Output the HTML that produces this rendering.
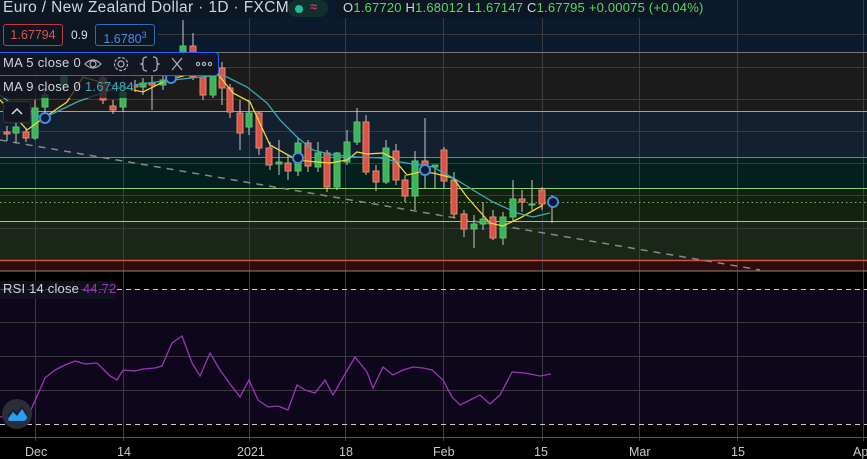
<!DOCTYPE html>
<html><head><meta charset="utf-8"><style>
body{margin:0;width:867px;height:459px;overflow:hidden;background:#000;font-family:"Liberation Sans",sans-serif}
.t{position:absolute;white-space:nowrap}
</style></head><body>
<svg width="867" height="459" style="position:absolute;left:0;top:0" xmlns="http://www.w3.org/2000/svg">
<rect x="0" y="0" width="867" height="52" fill="#0b1a2d"/>
<rect x="0" y="52" width="867" height="59" fill="#1b1b1c"/>
<rect x="0" y="111" width="867" height="46" fill="#122030"/>
<rect x="0" y="157" width="867" height="31" fill="#03201d"/>
<rect x="0" y="188" width="867" height="34" fill="#12220f"/>
<rect x="0" y="222" width="867" height="38" fill="#1a2617"/>
<rect x="0" y="260" width="867" height="11" fill="#2c0c0c"/>
<rect x="0" y="289" width="867" height="135" fill="#0e061a"/>
<g stroke="#3a3a3e" stroke-width="1">
<line x1="0" y1="34.5" x2="867" y2="34.5"/><line x1="0" y1="67.5" x2="867" y2="67.5"/><line x1="0" y1="99.5" x2="867" y2="99.5"/>
<line x1="0" y1="131.5" x2="867" y2="131.5"/><line x1="0" y1="163.5" x2="867" y2="163.5"/><line x1="0" y1="195.5" x2="867" y2="195.5"/><line x1="0" y1="228.5" x2="867" y2="228.5"/>
<line x1="0" y1="322.5" x2="867" y2="322.5"/><line x1="0" y1="356.5" x2="867" y2="356.5"/><line x1="0" y1="390.5" x2="867" y2="390.5"/>
</g>
<g stroke="#3c3c44" stroke-width="1">
<line x1="35.5" y1="0" x2="35.5" y2="441"/><line x1="123.5" y1="0" x2="123.5" y2="441"/><line x1="249.5" y1="0" x2="249.5" y2="441"/><line x1="345.5" y1="0" x2="345.5" y2="441"/><line x1="443.5" y1="0" x2="443.5" y2="441"/><line x1="542.5" y1="0" x2="542.5" y2="441"/><line x1="639.5" y1="0" x2="639.5" y2="441"/><line x1="737.5" y1="0" x2="737.5" y2="441"/><line x1="863.5" y1="0" x2="863.5" y2="441"/>
</g>
<line x1="0" y1="52.5" x2="867" y2="52.5" stroke="#777" />
<line x1="0" y1="111.5" x2="867" y2="111.5" stroke="#6ab0e8"/>
<line x1="0" y1="157.5" x2="867" y2="157.5" stroke="#2aa39a"/>
<line x1="0" y1="188.5" x2="867" y2="188.5" stroke="#8fd46a"/>
<line x1="0" y1="202.5" x2="867" y2="202.5" stroke="#6fbf5a" stroke-dasharray="1.5 3"/>
<line x1="0" y1="221.5" x2="867" y2="221.5" stroke="#8fd46a"/>
<line x1="0" y1="260.5" x2="867" y2="260.5" stroke="#d8503a" stroke-width="1.5"/>
<line x1="0" y1="271" x2="867" y2="271" stroke="#9a7f7f"/>
<line x1="0" y1="289.5" x2="867" y2="289.5" stroke="#ccc" stroke-dasharray="5 4"/>
<line x1="0" y1="424.5" x2="867" y2="424.5" stroke="#ccc" stroke-dasharray="5 4"/>
<line x1="0" y1="437.5" x2="867" y2="437.5" stroke="#555"/>
<line x1="0" y1="140" x2="760" y2="270" stroke="#888" stroke-width="1.5" stroke-dasharray="7 6"/>
<g stroke-width="1">
<g stroke="#c9c9c9">
<line x1="7" y1="126" x2="7" y2="141"/><line x1="16" y1="120" x2="16" y2="143"/><line x1="26" y1="128" x2="26" y2="142"/><line x1="35" y1="100" x2="35" y2="140"/><line x1="45" y1="88" x2="45" y2="112"/><line x1="64" y1="62" x2="64" y2="90"/><line x1="103" y1="72" x2="103" y2="104"/><line x1="113" y1="100" x2="113" y2="114"/><line x1="123" y1="85" x2="123" y2="112"/><line x1="135" y1="80" x2="135" y2="92"/><line x1="143" y1="78" x2="143" y2="95"/><line x1="152" y1="76" x2="152" y2="110"/><line x1="163" y1="72" x2="163" y2="90"/><line x1="183" y1="20" x2="183" y2="60"/><line x1="193" y1="33" x2="193" y2="80"/><line x1="203" y1="72" x2="203" y2="100"/><line x1="213" y1="68" x2="213" y2="98"/><line x1="222" y1="62" x2="222" y2="105"/><line x1="230" y1="84" x2="230" y2="118"/><line x1="240" y1="100" x2="240" y2="150"/><line x1="249" y1="100" x2="249" y2="135"/><line x1="259" y1="112" x2="259" y2="155"/><line x1="270" y1="142" x2="270" y2="170"/><line x1="279" y1="140" x2="279" y2="175"/><line x1="288" y1="155" x2="288" y2="180"/><line x1="298" y1="138" x2="298" y2="176"/><line x1="308" y1="140" x2="308" y2="172"/><line x1="318" y1="142" x2="318" y2="172"/><line x1="327" y1="150" x2="327" y2="192"/><line x1="337" y1="152" x2="337" y2="190"/><line x1="347" y1="130" x2="347" y2="165"/><line x1="357" y1="108" x2="357" y2="145"/><line x1="366" y1="115" x2="366" y2="175"/><line x1="376" y1="165" x2="376" y2="191"/><line x1="386" y1="140" x2="386" y2="184"/><line x1="396" y1="144" x2="396" y2="185"/><line x1="405" y1="175" x2="405" y2="202"/><line x1="415" y1="151" x2="415" y2="210"/><line x1="425" y1="118" x2="425" y2="188"/><line x1="435" y1="165" x2="435" y2="188"/><line x1="444" y1="147" x2="444" y2="188"/><line x1="454" y1="172" x2="454" y2="218"/><line x1="464" y1="210" x2="464" y2="237"/><line x1="474" y1="215" x2="474" y2="248"/><line x1="483" y1="202" x2="483" y2="230"/><line x1="493" y1="210" x2="493" y2="240"/><line x1="503" y1="212" x2="503" y2="245"/><line x1="513" y1="180" x2="513" y2="222"/><line x1="522" y1="190" x2="522" y2="212"/><line x1="532" y1="180" x2="532" y2="210"/><line x1="542" y1="187" x2="542" y2="210"/><line x1="552" y1="195" x2="552" y2="223"/>
</g>
<g fill="#d9534a" stroke="#e88a6a">
<rect x="4" y="132" width="6" height="2"/><rect x="23" y="132" width="6" height="6"/><rect x="100" y="78" width="6" height="22"/><rect x="110" y="106" width="6" height="4"/><rect x="132" y="85" width="6" height="2"/><rect x="149" y="83" width="6" height="2"/><rect x="190" y="46" width="6" height="31"/><rect x="200" y="77" width="6" height="18"/><rect x="219" y="68" width="6" height="20"/><rect x="227" y="88" width="6" height="24"/><rect x="237" y="113" width="6" height="20"/><rect x="256" y="113" width="6" height="35"/><rect x="266" y="148" width="6" height="17"/><rect x="285" y="163" width="6" height="8"/><rect x="305" y="143" width="6" height="23"/><rect x="324" y="153" width="6" height="34"/><rect x="363" y="122" width="6" height="50"/><rect x="373" y="171" width="6" height="11"/><rect x="393" y="151" width="6" height="29"/><rect x="402" y="180" width="6" height="16"/><rect x="422" y="161" width="6" height="4"/><rect x="441" y="150" width="6" height="31"/><rect x="451" y="180" width="6" height="34"/><rect x="461" y="214" width="6" height="15"/><rect x="490" y="217" width="6" height="21"/><rect x="519" y="199" width="6" height="3"/><rect x="539" y="190" width="6" height="14"/>
</g>
<g fill="#3fb35a" stroke="#4fc96a">
<rect x="13" y="127" width="6" height="6"/><rect x="32" y="108" width="6" height="30"/><rect x="42" y="95" width="6" height="12"/><rect x="61" y="73" width="6" height="12"/><rect x="120" y="92" width="6" height="15"/><rect x="140" y="83" width="6" height="4"/><rect x="160" y="80" width="6" height="5"/><rect x="180" y="46" width="6" height="8"/><rect x="210" y="75" width="6" height="20"/><rect x="246" y="113" width="6" height="14"/><rect x="276" y="162" width="6" height="2"/><rect x="295" y="143" width="6" height="28"/><rect x="315" y="153" width="6" height="14"/><rect x="334" y="153" width="6" height="34"/><rect x="344" y="142" width="6" height="20"/><rect x="354" y="122" width="6" height="20"/><rect x="383" y="148" width="6" height="34"/><rect x="412" y="161" width="6" height="35"/><rect x="432" y="165" width="6" height="2"/><rect x="471" y="224" width="6" height="5"/><rect x="480" y="219" width="6" height="5"/><rect x="500" y="217" width="6" height="21"/><rect x="510" y="199" width="6" height="18"/><rect x="529" y="204" width="6" height="1"/>
</g>
</g>
<polyline fill="none" stroke="#f0d43a" stroke-width="1.3" points="0,100 5,105 27,130 45,117 67,102 83,77 110,85 143,92 167,80 187,75 217,73 233,93 250,102 270,145 297,160 317,162 330,163 347,160 357,152 367,154 383,153 393,158 407,175 420,172 433,173 453,178 467,197 490,223 503,226 520,218 543,205"/>
<polyline fill="none" stroke="#3aaab8" stroke-width="1.3" points="0,95 20,110 45,118 50,115 77,102 110,90 140,84 173,80 200,77 223,75 247,87 267,103 280,120 297,137 313,150 333,155 357,157 380,158 400,162 433,167 457,180 473,190 493,202 517,213 533,217 550,213"/>
<g fill="#0a1a3a" stroke="#4a8cd8" stroke-width="2">
<circle cx="45" cy="118" r="5"/><circle cx="171" cy="78" r="5"/><circle cx="298" cy="158" r="5"/><circle cx="425" cy="170" r="5"/><circle cx="553" cy="202" r="5"/>
</g>
<polyline fill="none" stroke="#9c35b8" stroke-width="1.3" points="0,417 30,412 45,378 55,370 65,365 75,361 85,364 97,363 105,371 110,376 117,380 123,370 135,371 143,369 155,368 162,366 172,343 182,336 192,363 200,376 210,353 220,370 230,384 240,397 249,380 258,400 268,407 278,406 288,410 297,385 305,390 315,393 325,380 333,395 345,374 355,357 367,372 373,388 383,367 393,375 403,370 413,367 423,368 432,370 443,380 452,397 460,405 470,400 480,395 490,404 500,395 512,372 525,373 540,376 551,374"/>
<circle cx="17" cy="414" r="15" fill="#2a2e39"/>
<path d="M8,419 L13,412 L17,416 L22,409 L27,417 Q27,421 23,421 L11,421 Q8,421 8,419Z" fill="#2a9df4"/>
<path d="M8,416 L13,410 L17,414 L22,407 L27,414" fill="none" stroke="#1b1f2a" stroke-width="1.5"/>
</svg>
<div class="t" style="left:0;top:0;width:283px;height:18px;background:#0d1724"></div>
<div class="t" style="left:3px;top:-1px;font-size:15.5px;letter-spacing:0.35px;color:#d1d4dc">Euro / New Zealand Dollar · 1D · FXCM</div>
<div class="t" style="left:288px;top:0;width:40px;height:17px;background:#10302e;border-radius:9px"></div>
<div class="t" style="left:295px;top:5px;width:8px;height:8px;border-radius:4px;background:#1fbfa0"></div>
<div class="t" style="left:310px;top:-1px;font-size:13px;color:#d0306a;font-weight:bold">≈</div>
<div class="t" style="left:336px;top:0;width:364px;height:18px;background:#0d1724"></div>
<div class="t" style="left:343px;top:0px;font-size:13px;letter-spacing:0.2px;color:#d1d4dc">O<span style="color:#5fd35f">1.67720</span> H<span style="color:#5fd35f">1.68012</span> L<span style="color:#5fd35f">1.67147</span> C<span style="color:#5fd35f">1.67795</span> <span style="color:#5fd35f">+0.00075 (+0.04%)</span></div>
<div class="t" style="left:0;top:18px;width:158px;height:34px;background:#0d1724"></div>
<div class="t" style="left:3px;top:24px;width:58px;height:20px;border:1px solid #c03a3a;border-radius:3px;color:#e05050;font-size:12.5px;line-height:20px;text-align:center">1.67794</div>
<div class="t" style="left:71px;top:28px;font-size:12px;color:#ddd">0.9</div>
<div class="t" style="left:95px;top:24px;width:58px;height:20px;border:1px solid #2c6fc0;border-radius:3px;color:#4a8ee0;font-size:12.5px;line-height:20px;text-align:center">1.6780<sup style="font-size:9px">3</sup></div>
<div class="t" style="left:0;top:52px;width:218px;height:22px;background:#131722;border:1px solid #2962ff;border-left:none;border-radius:0 4px 4px 0"></div>
<div class="t" style="left:3px;top:55px;font-size:13px;letter-spacing:0.3px;color:#d1d4dc">MA 5 close 0</div>
<svg class="t" style="left:84px;top:55px" width="130" height="18" xmlns="http://www.w3.org/2000/svg" fill="none" stroke="#b2b5be" stroke-width="1.2">
<path d="M1,9 Q9,1 17,9 Q9,17 1,9Z"/><circle cx="9" cy="9" r="3"/>
<circle cx="37" cy="9" r="3"/><circle cx="37" cy="9" r="6.5" stroke-dasharray="3 1.5"/>
<path d="M63,2 Q59,2 59,5 L59,8 L57,9 L59,10 L59,13 Q59,16 63,16 M69,2 Q73,2 73,5 L73,8 L75,9 L73,10 L73,13 Q73,16 69,16"/>
<path d="M88,3 L98,15 M98,3 L88,15"/>
<circle cx="114" cy="9" r="1.6"/><circle cx="120" cy="9" r="1.6"/><circle cx="126" cy="9" r="1.6"/>
</svg>
<div class="t" style="left:0;top:76px;width:134px;height:22px;background:rgba(19,23,34,0.75)"></div>
<div class="t" style="left:3px;top:79px;font-size:13px;letter-spacing:0.3px;color:#d1d4dc">MA 9 close 0 <span style="color:#3aaab8">1.67484</span></div>
<div class="t" style="left:3px;top:101px;width:28px;height:22px;background:#131722;border:1px solid #333;border-radius:3px;box-sizing:border-box"></div>
<svg class="t" style="left:11px;top:107px" width="12" height="8"><path d="M1,7 L6,2 L11,7" fill="none" stroke="#ddd" stroke-width="1.5"/></svg>
<div class="t" style="left:0;top:281px;width:116px;height:18px;background:rgba(19,23,34,0.7)"></div>
<div class="t" style="left:3px;top:281px;font-size:13px;letter-spacing:0.2px;color:#d1d4dc">RSI 14 close <span style="color:#9c35b8">44.72</span></div>
<div class="t" style="top:445px;font-size:12.5px;color:#c8c8c8;left:0;width:867px;height:14px">
<span class="t" style="left:25px">Dec</span><span class="t" style="left:117px">14</span><span class="t" style="left:237px">2021</span><span class="t" style="left:339px">18</span><span class="t" style="left:433px">Feb</span><span class="t" style="left:534px">15</span><span class="t" style="left:629px">Mar</span><span class="t" style="left:731px">15</span><span class="t" style="left:853px">Ap</span>
</div>
</body></html>
